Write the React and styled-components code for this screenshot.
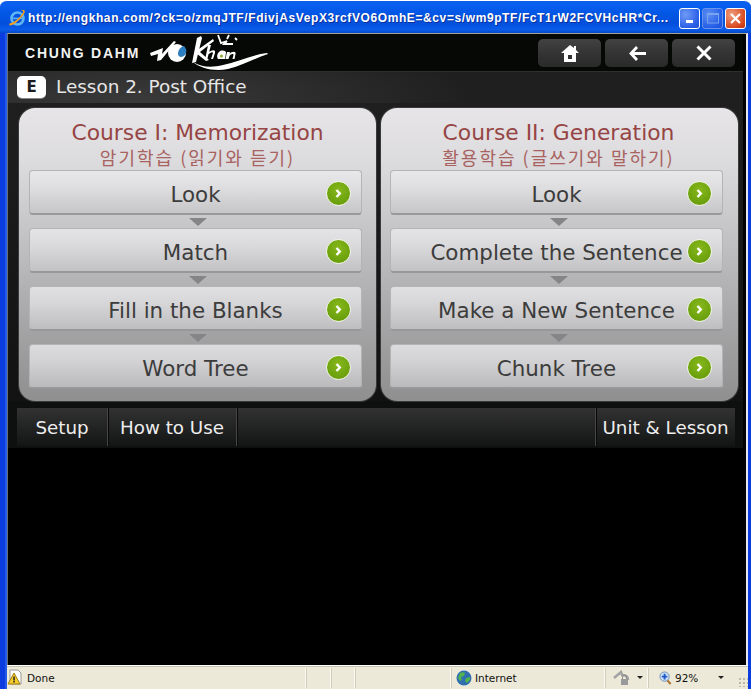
import React from 'react';
import styled, { createGlobalStyle } from 'styled-components';

const Global = createGlobalStyle`
  html, body { margin: 0; padding: 0; background: #fff; }
  body { width: 752px; height: 689px; overflow: hidden; font-family: "DejaVu Sans", sans-serif; }
  * { box-sizing: border-box; }
`;

const Win = styled.div`
  width: 751px; height: 689px; display: flex; flex-direction: column;
  background: #0a3fe0; border-radius: 7px 7px 0 0; overflow: hidden;
  border-top: 1px solid #fff; box-shadow: inset 0 1px 0 #fff;
`;
const TitleBar = styled.div`
  height: 32px; flex: none; display: flex; align-items: center; padding: 2px 5px 0 8px;
  background: linear-gradient(180deg, #0a5fe8 0%, #0a5ff0 12%, #0256e4 40%, #0250dc 70%, #0a5ce8 90%, #0247c8 100%);
`;
const TitleText = styled.div`
  flex: 1; margin-left: 2px; color: #fff; font: bold 12px "Liberation Sans", sans-serif;
  letter-spacing: 0.6px; white-space: nowrap; text-shadow: 1px 1px 0 #0a2f9c;
`;
const WinBtn = styled.div`
  width: 21px; height: 21px; margin-left: 2px; border-radius: 3px; border: 1px solid ${p => p.$dim ? '#7d9fee' : '#fff'};
  background: ${p => p.$close ? 'radial-gradient(circle at 30% 30%, #f0a080, #d8481f 70%, #b83010)' : 'radial-gradient(circle at 30% 30%, #6f9bf5, #2a5fe8 70%, #1e4fd0)'};
  opacity: ${p => p.$dim ? .85 : 1}; display: flex; align-items: center; justify-content: center;
`;
const Frame = styled.div`
  flex: 1; display: flex; min-height: 0; padding: 0 3px 0 7px;
  background: linear-gradient(90deg, #0a3ce0 0, #0a3ce0 5px, #3c78f0 6px, #0a3ce0 7px, #0a3ce0 100%);
`;
const Client = styled.div`
  flex: 1; display: flex; flex-direction: column; min-width: 0; background: #000;
  border-top: 1px solid #a8a090; border-left: 1px solid #66707a; border-right: 2px solid #e8e8f0;
`;
const Shell = styled.div`
  width: 735px; height: 414px; flex: none; display: flex; flex-direction: column; background: #0e1010;
`;
const Header = styled.header`
  height: 38px; flex: none; display: flex; align-items: center; justify-content: space-between;
  background: #060806; padding: 0 8px 0 17px; border-bottom: 1px solid #2f2f2f;
`;
const Brand = styled.div`
  display: flex; align-items: center; gap: 9px; color: #f2f2f2;
  font: bold 14px "Liberation Sans", sans-serif; letter-spacing: 1.8px;
`;
const Tools = styled.div` display: flex; gap: 4px; `;
const Tool = styled.button`
  width: 63px; height: 28px; border: 0; padding: 1px 0 0 1px; border-radius: 5px;
  background: linear-gradient(180deg, #424242, #343434 50%, #2a2a2a);
  display: flex; align-items: center; justify-content: center;
`;
const Lesson = styled.div`
  height: 31px; flex: none; display: flex; align-items: center; gap: 10px; padding: 0 0 2px 9px;
  color: #e6e6e6; font-size: 18.4px;
  background: radial-gradient(ellipse 340px 70px at 130px 28px, #3a3a3a, #1f1f1f 100%);
`;
const Badge = styled.div`
  width: 29px; height: 22px; border-radius: 5px; background: #fff; color: #1c1c1c; font: 900 15px "DejaVu Sans", sans-serif;
  display: flex; align-items: center; justify-content: center; box-shadow: 0 1px 0 #888;
`;
const Courses = styled.div`
  display: flex; gap: 5px; padding: 5px 0 0 11px; height: 298px; flex: none;
  background: linear-gradient(180deg, #1f1f1f 0, #121212 100%);
`;
const Panel = styled.section`
  width: 357px; height: 293px; border-radius: 16px; padding: 13px 0 0 ${p => p.$inset}px;
  display: flex; flex-direction: column; align-items: flex-start;
  background: linear-gradient(180deg, #e7e5e8 0%, #dcdbdd 18%, #a9a8aa 70%, #8f8f8f 100%);
  box-shadow: 0 0 0 1px #3a3a3a;
`;
const PanelHead = styled.div`
  width: 337px; text-align: center;
`;
const PanelTitle = styled.h2`
  margin: 0; font-weight: 400; font-size: 21.8px; line-height: 24px; color: #964544;
`;
const PanelSub = styled.div`
  font: 18px/24px "Noto Sans CJK KR", "DejaVu Sans", sans-serif; color: #a8625f; height: 25px;
  letter-spacing: 2px; white-space: nowrap;
`;
const Step = styled.button`
  height: 45px; width: 333px; flex: none; position: relative; padding: 5px 0 0; cursor: pointer;
  border: 1px solid #b4b4b6; border-bottom: 2px solid #98989a; border-radius: 4px;
  background: linear-gradient(180deg,
    rgb(${p => 232 - p.$i * 4},${p => 231 - p.$i * 4},${p => 233 - p.$i * 4}) 0%,
    rgb(${p => 222 - p.$i * 4},${p => 221 - p.$i * 4},${p => 223 - p.$i * 4}) 40%,
    rgb(${p => 198 - p.$i * 4},${p => 197 - p.$i * 4},${p => 199 - p.$i * 4}) 100%);
  color: #3c3c3c; font: 21.4px "DejaVu Sans", sans-serif;
  display: flex; align-items: center; justify-content: center;
`;
const Go = styled.span`
  position: absolute; right: 10px; top: 10px; width: 25px; height: 25px; border-radius: 50%;
  border: 1px solid #f2f6e8; background: radial-gradient(circle at 50% 35%, #86b81c, #6a9f0c 75%);
  display: flex; align-items: center; justify-content: center;
`;
const Arrow = styled.div`
  width: 0; height: 0; margin: 3px 0 2px 160px; flex: none;
  border-left: 9px solid transparent; border-right: 9px solid transparent; border-top: 8px solid #858587;
`;
const Nav = styled.nav`
  margin: 7px 0 0 9px; width: 718px; height: 38px; flex: none; display: flex;
  background: linear-gradient(180deg, #323232, #131514);
`;
const NavItem = styled.div`
  display: flex; align-items: center; justify-content: center; height: 100%; color: #eee; font-size: 18.3px; padding-top: 1px;
  width: ${p => p.$w ? p.$w + 'px' : 'auto'}; flex: ${p => p.$grow ? 1 : 'none'};
  border-right: ${p => p.$last ? 0 : '1px solid #454545'}; box-shadow: ${p => p.$last ? 'none' : '1px 0 0 #0a0a0a'};
`;
const Status = styled.footer`
  flex: 1; height: 24px; display: flex; align-items: center; background: #ece9d8;
  border-top: 1px solid #fff; box-shadow: inset 0 1px 0 #c8c5b4;
  font: 10.5px "DejaVu Sans", sans-serif; color: #111;
`;
const Cell = styled.div`
  height: 20px; display: flex; align-items: center; gap: ${p => p.$gap ?? 3}px; flex: none;
  width: ${p => p.$w}px; padding-left: ${p => p.$pad || 0}px;
  border-right: ${p => p.$end ? 0 : '1px solid #fbfaf2'}; box-shadow: ${p => p.$end ? 'none' : '1px 0 0 #d0cdbc'};
`;
const Outer = styled.div`
  flex: none; height: 24px; display: flex; padding: 0 3px 0 7px;
  background: linear-gradient(90deg, #0a3ce0 0, #0a3ce0 5px, #3c78f0 6px, #0a3ce0 7px);
`;
const Drop = styled.span`
  width: 0; height: 0; flex: none; margin-left: ${p => p.$m || 0}px;
  border-left: 3px solid transparent; border-right: 3px solid transparent; border-top: 3px solid #222;
`;
const Grip = styled.div`
  width: 10px; height: 10px; margin-top: 9px; margin-left: auto;
  background-image: radial-gradient(#bdb9a6 1px, transparent 1.200px); background-size: 4px 4px;
`;

const IE = () => (
  <svg width="18" height="18" viewBox="0 0 18 18">
    <circle cx="9.500" cy="9.500" r="6" fill="none" stroke="#5fb4f2" strokeWidth="2.600" />
    <rect x="5" y="8.600" width="9" height="1.600" fill="#5fb4f2" />
    <path d="M1 16c1.500 1.500 6-1 10-5s7-8 5.500-9.500c-1-1-3 0-4 .5 2-.5 3 0 2.500 1.500-1 2.500-5 6.500-8 8.500-3 2-5 2.500-5 2z" fill="#f0a020" />
  </svg>
);
const Chevron = () => (
  <svg width="9" height="11" viewBox="0 0 9 11"><path d="M2.500 2l3.300 3.500-3.300 3.500" fill="none" stroke="#fff" strokeWidth="2.400" /></svg>
);
const Logo = () => (
  <svg width="122" height="38" viewBox="0 0 122 38">
    <path d="M1 19l13-5-1 6 12-13 2 1-15 18-4 1 1-7-7 2z" fill="#fff" />
    <circle cx="28" cy="19" r="9" fill="#fff" />
    <path d="M29 20c0-5 4-8 6-8 2 2 3 5 2 7-1 3-4 4-5 4s-3-1-3-3z" fill="#2d7ec0" />
    <path d="M48 4l4-2 1 2-6 24-4 1z" fill="#fff" />
    <path d="M47 17l17-12 1 2-14 11 9 8-3 1-10-8z" fill="#fff" />
    <path d="M59 11l3 0-4 15-2 0zM59 19c3-3 8-4 7 0l-2 6-2 0 2-6c0-2-4 0-5 2z" fill="#fff" />
    <path d="M70 18c2-2 7-2 7 1l-1 6-7 0c-2-3 0-6 1-7z" fill="#fff" />
    <circle cx="72.500" cy="22" r="1.600" fill="#8db33a" />
    <path d="M78 18l3 0-.5 2c2-3 7-3 6 0l-1 5-2 0 1-4c0-2-3-1-4 1l-1 3-3 0z" fill="#fff" />
    <path d="M69 1l3 8 6-2-3 3 9 0M80 1l-2 4M86 4l2 2" fill="none" stroke="#fff" strokeWidth="1.800" />
    <path d="M44 28c8 5 18 6 30 3 14-3 28-10 44-12l1 1c-13 4-24 11-40 15-14 3-28-1-35-7z" fill="#fff" />
  </svg>
);
const Shield = () => (
  <svg width="17" height="17" viewBox="0 0 17 17">
    <path d="M3 1h8l3 3v11H3z" fill="#fff" stroke="#9a9a9a" />
    <path d="M1 15L7 4l6 11z" fill="#f6cf2c" stroke="#9d7c10" />
    <rect x="6.300" y="7.500" width="1.500" height="4" fill="#222" /><rect x="6.300" y="12" width="1.500" height="1.500" fill="#222" />
  </svg>
);
const Globe = () => (
  <svg width="16" height="16" viewBox="0 0 16 16">
    <circle cx="8" cy="8" r="7.500" fill="#2f6fb0" />
    <path d="M4 3c2-1 4-1 5 0l-1 3-3 1 1 3-2 1-2-3zM10 8l4-1 0 3-3 3-2-2z" fill="#52b34e" />
  </svg>
);
const Lock = () => (
  <svg width="18" height="16" viewBox="0 0 18 16">
    <path d="M1 8l7-6 1 3c4 0 6 2 6 5" fill="none" stroke="#a3a3a3" strokeWidth="2.500" />
    <rect x="8" y="9" width="7" height="6" fill="#9a9a9a" />
    <path d="M9.500 9V7a2 2 0 014 0v2" fill="none" stroke="#8a8a8a" />
  </svg>
);
const ZoomIcon = () => (
  <svg width="13" height="14" viewBox="0 0 14 15" style={{ flex: 'none' }}>
    <path d="M8 9l4.500 5" stroke="#b07030" strokeWidth="2.200" />
    <circle cx="6" cy="6" r="5" fill="#cfe2f6" stroke="#6d8cb3" />
    <path d="M6 3v6M3 6h6" stroke="#1f58c8" strokeWidth="2" />
  </svg>
);

const Course = ({ title, sub, steps, inset }) => (
  <Panel $inset={inset}>
    <PanelHead>
      <PanelTitle>{title}</PanelTitle>
      <PanelSub>{sub}</PanelSub>
    </PanelHead>
    {steps.map((s, i) => (
      <React.Fragment key={s}>
        {i > 0 && <Arrow />}
        <Step $i={i}>{s}<Go><Chevron /></Go></Step>
      </React.Fragment>
    ))}
  </Panel>
);

export default function App() {
  return (
    <>
      <Global />
      <Win>
        <TitleBar>
          <IE />
          <TitleText>http://engkhan.com/?ck=o/zmqJTF/FdivjAsVepX3rcfVO6OmhE=&amp;cv=s/wm9pTF/FcT1rW2FCVHcHR*Cr...</TitleText>
          <WinBtn><svg width="9" height="9" viewBox="0 0 9 9"><rect x="1" y="6" width="7" height="3" fill="#fff" /></svg></WinBtn>
          <WinBtn $dim><svg width="12" height="12" viewBox="0 0 12 12"><rect x=".5" y="1.500" width="11" height="9.500" fill="none" stroke="#8fb0f0" /><rect x="0" y="1" width="12" height="2" fill="#8fb0f0" /></svg></WinBtn>
          <WinBtn $close><svg width="13" height="13" viewBox="0 0 13 13"><path d="M2 2l9 9M11 2l-9 9" stroke="#fff" strokeWidth="2.200" /></svg></WinBtn>
        </TitleBar>
        <Frame>
          <Client>
            <Shell>
              <Header>
                <Brand>CHUNG DAHM<Logo /></Brand>
                <Tools>
                  <Tool><svg width="18" height="17" viewBox="0 0 18 17"><path d="M9 0L0 8h3v9h12V8h3l-3-3V1h-2v2zM7 10h4v4H7z" fill="#fff" fillRule="evenodd" /></svg></Tool>
                  <Tool><svg width="17" height="15" viewBox="0 0 17 15"><path d="M8 1L2 7.500 8 14M2 7.500h15" fill="none" stroke="#fff" strokeWidth="2.800" /></svg></Tool>
                  <Tool><svg width="16" height="16" viewBox="0 0 16 16"><path d="M1.500 1.500l13 13M14.500 1.500l-13 13" stroke="#fff" strokeWidth="3" /></svg></Tool>
                </Tools>
              </Header>
              <Lesson><Badge>E</Badge>Lesson 2. Post Office</Lesson>
              <Courses>
                <Course inset={10} title="Course I: Memorization" sub="암기학습 (읽기와 듣기)" steps={['Look', 'Match', 'Fill in the Blanks', 'Word Tree']} />
                <Course inset={9} title="Course II: Generation" sub="활용학습 (글쓰기와 말하기)" steps={['Look', 'Complete the Sentence', 'Make a New Sentence', 'Chunk Tree']} />
              </Courses>
              <Nav>
                <NavItem $w={91}>Setup</NavItem>
                <NavItem $w={129}>How to Use</NavItem>
                <NavItem $grow />
                <NavItem $w={139} $last>Unit &amp; Lesson</NavItem>
              </Nav>
            </Shell>
          </Client>
        </Frame>
        <Outer>
          <Status>
            <Cell $w={299} $pad={0} $gap={3}><Shield />Done</Cell>
            <Cell $w={25} /><Cell $w={24} />
            <Cell $w={96} />
            <Cell $w={154} $pad={5}><Globe />Internet</Cell>
            <Cell $w={43} $pad={8} $gap={6}><Lock /><Drop /></Cell>
            <Cell $w={85} $pad={11} $end><ZoomIcon />92%<Drop $m={17} /></Cell>
            <Grip />
          </Status>
        </Outer>
      </Win>
    </>
  );
}
